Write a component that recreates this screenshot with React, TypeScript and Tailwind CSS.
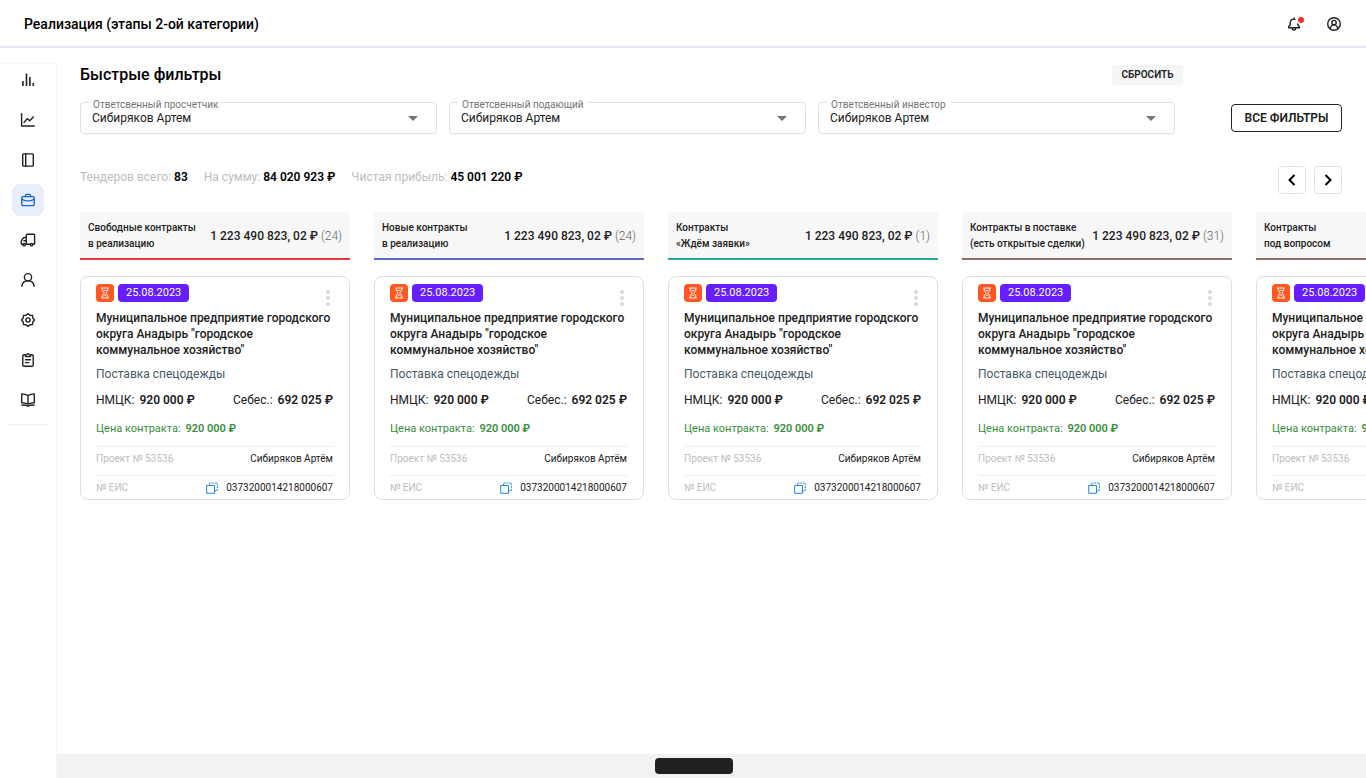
import React, { useRef, useState } from "react";
import clsx from "clsx";

type Column = {
  title: [string, string];
  sum: string;
  count: number;
  border: string;
};

const columns: Column[] = [
  { title: ["Свободные контракты", "в реализацию"], sum: "1 223 490 823, 02 ₽", count: 24, border: "border-[#e53935]" },
  { title: ["Новые контракты", "в реализацию"], sum: "1 223 490 823, 02 ₽", count: 24, border: "border-[#5c6bc0]" },
  { title: ["Контракты", "«Ждём заявки»"], sum: "1 223 490 823, 02 ₽", count: 1, border: "border-[#26a69a]" },
  { title: ["Контракты в поставке", "(есть открытые сделки)"], sum: "1 223 490 823, 02 ₽", count: 31, border: "border-[#8d6e63]" },
  { title: ["Контракты", "под вопросом"], sum: "1 223 490 823, 02 ₽", count: 12, border: "border-[#8d6e63]" },
];

const filters = [
  { id: "calc", label: "Ответсвенный просчетчик" },
  { id: "submit", label: "Ответсвенный подающий" },
  { id: "invest", label: "Ответсвенный инвестор" },
];

const stats = [
  { label: "Тендеров всего:", value: "83" },
  { label: "На сумму:", value: "84 020 923 ₽" },
  { label: "Чистая прибыль:", value: "45 001 220 ₽" },
];

const Icon = ({ children }: { children: React.ReactNode }) => (
  <svg
    viewBox="0 0 16 16"
    className="size-4"
    fill="none"
    stroke="currentColor"
    strokeWidth="1.4"
    strokeLinecap="round"
    strokeLinejoin="round"
    aria-hidden="true"
  >
    {children}
  </svg>
);

const menu = [
  {
    name: "Статистика",
    icon: <path d="M2.9 9V14M6.5 1.5V14M9.900 5V14M13.300 11V14" strokeLinecap="butt" strokeWidth="1.600" />,
  },
  {
    name: "График",
    icon: <path d="M1.600 1.600v12.400H14.300M4 10.400l3.300-3.600 2.400 2 3.600-3.700" />,
  },
  {
    name: "Журнал",
    icon: (
      <>
        <rect x="2.7" y="1.9" width="10.6" height="12.2" rx="0.8" />
        <path d="M5.700 2v12" />
      </>
    ),
  },
  {
    name: "Реализация",
    icon: (
      <>
        <rect x="1.8" y="4.600" width="12.4" height="9" rx="1" />
        <path d="M5.500 4.400V3.400c0-.6.4-1 1-1h3c.6 0 1 .4 1 1v1M2 7.400c1.600.9 3 1.400 4.500 1.500h3c1.500-.1 2.900-.6 4.500-1.500M6.800 8.900h2.400" />
      </>
    ),
  },
  {
    name: "Доставка",
    icon: (
      <>
        <path d="M6.300 12.300V3c0-.5.3-.8.800-.8h6.700c.5 0 .8.3.8.800v8.500c0 .5-.3.800-.8.800h-1M10.300 12.300H5.700M6.300 5.500H4.200c-.5 0-.8.2-1 .6L1.500 8.700c-.1.200-.2.500-.2.700v2.100c0 .5.3.8.800.800h.4M6.300 8.700H3.900" />
        <circle cx="4.100" cy="12.700" r="1.200" />
        <circle cx="11.600" cy="12.700" r="1.200" />
      </>
    ),
  },
  {
    name: "Клиенты",
    icon: (
      <>
        <circle cx="8" cy="5.200" r="3.600" />
        <path d="M1.800 14.300c.4-3.400 2.900-5.500 6.200-5.500s5.800 2.100 6.200 5.500" />
      </>
    ),
  },
  {
    name: "Настройки",
    icon: (
      <>
        <path d="M8 1.600 10 3.200 12.500 3.500 12.800 6 14.400 8 12.800 10 12.500 12.500 10 12.800 8 14.400 6 12.800 3.500 12.500 3.200 10 1.600 8 3.200 6 3.500 3.500 6 3.200z" />
        <circle cx="8" cy="8" r="2.100" />
      </>
    ),
  },
  {
    name: "Задачи",
    icon: (
      <>
        <path d="M5.300 2.800H4c-.7 0-1.200.5-1.200 1.200v9c0 .7.500 1.200 1.200 1.200h8c.7 0 1.200-.5 1.200-1.200V4c0-.7-.5-1.200-1.200-1.200h-1.300" />
        <path d="M5.500 4.600V3.200l1.300-.4c.2-.7.600-1.100 1.200-1.100s1 .4 1.200 1.100l1.300.4v1.400zM5.500 7.700h5M5.500 10.600h3.400" />
      </>
    ),
  },
  {
    name: "Справочник",
    icon: (
      <>
        <path d="M8 3.600C6.200 2.300 4.200 1.900 1.700 1.900v8.800c2.500 0 4.500.3 6.300 1.400 1.800-1.100 3.800-1.400 6.300-1.400V1.900C11.800 1.900 9.800 2.300 8 3.600zM8 3.600v8.500" />
        <path d="M1.700 13.100c2.200-.3 4.300 0 6.300 1.100 2-1.100 4.100-1.400 6.300-1.100" />
      </>
    ),
  },
];

const Header = () => (
  <header className="flex h-12 items-center justify-between border-b-2 border-[#e7e5f2] px-6 pt-0.5">
    <h1 className="text-[14px] font-medium leading-5 text-black">
      Реализация (этапы 2-ой категории)
    </h1>
    <div className="flex gap-6">
      <button type="button" aria-label="Уведомления" className="relative size-4">
        <Icon>
          <path d="M8 2v1M9 3.300C6.500 2.600 4.300 4 4.300 6.500v2.300L2.600 10.700v1h10.800v-1L11.700 8.800V8M6.300 12c0 1.300.7 2.100 1.700 2.100s1.700-.8 1.700-2.100" />
        </Icon>
        <span className="absolute -right-0.5 top-px size-1.5 rounded-full bg-[#ff2d2d]" />
      </button>
      <button type="button" aria-label="Профиль" className="size-4">
        <Icon>
          <circle cx="8" cy="8" r="6.300" />
          <circle cx="8" cy="6.600" r="2.200" />
          <path d="M4.300 12.800c.3-2.400 1.700-3.900 3.700-3.900s3.400 1.500 3.700 3.900" />
        </Icon>
      </button>
    </div>
  </header>
);

const Sidebar = () => (
  <aside className="mt-[15px] w-[57px] shrink-0 border-r border-t border-[#f7f7fa]">
    <nav className="mx-2 flex flex-col items-center gap-2 border-b border-[#f0f0fa] pb-2">
      {menu.map((item) => (
        <button
          key={item.name}
          type="button"
          aria-label={item.name}
          className={clsx(
            "flex size-8 items-center justify-center rounded-lg",
            item.name === "Реализация" ? "bg-[#e8eefa] text-[#1f66d6]" : "text-[#212121]"
          )}
        >
          <Icon>{item.icon}</Icon>
        </button>
      ))}
    </nav>
  </aside>
);

const FilterSelect = ({ id, label }: { id: string; label: string }) => (
  <div className="relative">
    <select
      id={id}
      className="h-8 w-full appearance-none rounded border border-[#e0e0e0] bg-white px-[11px] text-[12px] leading-4 text-[#212121]"
    >
      <option>Сибиряков Артем</option>
    </select>
    <label
      htmlFor={id}
      className="absolute -top-[3px] left-[9px] bg-white px-1 text-[10px] leading-3 text-[#757575]"
    >
      {label}
    </label>
    <svg
      viewBox="0 0 10 5"
      className="pointer-events-none absolute right-[19px] top-3.5 h-[5px] w-2.5 fill-[#757575]"
      aria-hidden="true"
    >
      <path d="M0 0h10L5 5z" />
    </svg>
  </div>
);

const Card = () => (
  <article className="rounded-lg border border-[#e0e0e0] bg-white px-[15px] pb-[3px] pt-[7px] text-[12px] leading-4 text-[#212121]">
    <div className="flex items-start justify-between">
      <div className="flex gap-1">
        <span className="flex size-[18px] items-center justify-center rounded bg-[#ff5722] text-white">
          <svg viewBox="0 0 12 12" className="size-3" fill="none" stroke="currentColor" aria-hidden="true">
            <path d="M2 1h8M2 11h8M3.200 1v2.300L5.200 6 3.200 8.700V11M8.800 1v2.300L6.800 6l2 2.700V11M4.500 3.500h3M4.500 9 6 7.800 7.500 9" strokeWidth="0.9" />
          </svg>
        </span>
        <span className="rounded bg-[#651fff] px-2 text-[11px] leading-[18px] text-white">
          25.08.2023
        </span>
      </div>
      <button type="button" aria-label="Меню карточки" className="mt-1 flex h-5 w-3 items-center justify-center">
        <svg viewBox="0 0 4 16" className="h-4 w-1 fill-[#d9d9d9]" aria-hidden="true">
          <circle cx="2" cy="2" r="2" />
          <circle cx="2" cy="8" r="2" />
          <circle cx="2" cy="14" r="2" />
        </svg>
      </button>
    </div>
    <h3 className="mt-0.5 font-medium">
      Муниципальное предприятие городского округа Анадырь "городское коммунальное хозяйство"
    </h3>
    <p className="mt-2 text-[#455a64]">Поставка спецодежды</p>
    <div className="mt-2.5 flex justify-between pr-px">
      <p>
        НМЦК: <b className="ml-0.5 font-semibold">920 000 ₽</b>
      </p>
      <p>
        Себес.: <b className="ml-0.5 font-semibold">692 025 ₽</b>
      </p>
    </div>
    <p className="mt-[13px] text-[11px] text-[#388e3c]">
      Цена контракта: <b className="ml-0.5 font-semibold">920 000 ₽</b>
    </p>
    <div className="mt-[9px] flex justify-between border-t border-[#eeeeee] pb-2 pr-px pt-1 text-[10px]">
      <span className="text-[#bdbdbd]">Проект № 53536</span>
      <span>Сибиряков Артём</span>
    </div>
    <div className="flex justify-between border-t border-[#eeeeee] pr-px pt-1 text-[10px]">
      <span className="text-[#bdbdbd]">№ ЕИС</span>
      <span className="flex items-center gap-2">
        <button type="button" aria-label="Скопировать номер" className="text-[#1e88e5]">
          <svg viewBox="0 0 12 12" className="size-3" fill="none" stroke="currentColor" aria-hidden="true">
            <path d="M.7 3.500h7.800v7.800H.7z" />
            <path d="M3.500 3.500V1h7.800v7.800H8.500" strokeDasharray="1.800 0.900" />
          </svg>
        </button>
        0373200014218000607
      </span>
    </div>
  </article>
);

const arrowClass =
  "flex size-7 items-center justify-center rounded border border-[#e0e0e0] bg-white text-black";

export default function App() {
  const boardRef = useRef<HTMLDivElement>(null);
  const [formKey, setFormKey] = useState(0);

  const scroll = (dir: number) => {
    boardRef.current?.scrollBy({ left: dir * 294, behavior: "smooth" });
  };

  return (
    <div className="flex min-h-screen flex-col bg-white font-[Roboto,sans-serif] text-[#212121]">
      <Header />
      <div className="flex flex-1">
        <Sidebar />
        <div className="flex min-w-0 flex-1 flex-col">
          <main className="flex-1 pl-[23px] pt-4">
            <section className="flex items-end gap-12 pr-6">
              <div className="flex-1">
                <div className="flex items-center justify-between">
                  <h2 className="text-[16px] font-medium leading-[22px] text-black">Быстрые фильтры</h2>
                  {/* remounts the selects with their defaults */}
                  <button
                    type="button"
                    onClick={() => setFormKey(formKey + 1)}
                    className="h-5 w-[71px] rounded bg-[#f5f5f5] text-[10px] font-semibold uppercase leading-4"
                  >
                    Сбросить
                  </button>
                </div>
                <div key={formKey} className="mt-4 grid grid-cols-3 gap-3 pr-2">
                  {filters.map((f) => (
                    <FilterSelect key={f.id} {...f} />
                  ))}
                </div>
              </div>
              <button
                type="button"
                className="mb-0.5 h-7 w-[111px] rounded border border-[#212121] text-[12px] font-semibold uppercase leading-4"
              >
                Все фильтры
              </button>
            </section>

            <section className="mt-8 flex items-start justify-between pr-6">
              <div className="flex gap-4 pt-[3px] text-[12px] leading-4">
                {stats.map((s) => (
                  <p key={s.label} className="text-[#bdbdbd]">
                    {s.label} <b className="font-semibold text-black">{s.value}</b>
                  </p>
                ))}
              </div>
              <div className="flex gap-2">
                <button type="button" aria-label="Назад" className={arrowClass} onClick={() => scroll(-1)}>
                  <svg viewBox="0 0 12 12" className="size-3" fill="none" stroke="currentColor" strokeWidth="2">
                    <path d="M8.500 1 3.500 6l5 5" />
                  </svg>
                </button>
                <button type="button" aria-label="Вперёд" className={arrowClass} onClick={() => scroll(1)}>
                  <svg viewBox="0 0 12 12" className="size-3" fill="none" stroke="currentColor" strokeWidth="2">
                    <path d="m3.500 1 5 5-5 5" />
                  </svg>
                </button>
              </div>
            </section>

            <div ref={boardRef} className="mt-[18px] flex gap-6 overflow-x-auto [scrollbar-width:none]">
              {columns.map((col, i) => (
                <section key={i} className="w-[270px] shrink-0">
                  <div
                    className={clsx(
                      "flex h-12 items-center justify-between rounded-t border-b-2 bg-[#f7f7f7] px-2 pt-0.5",
                      col.border
                    )}
                  >
                    <h2 className="whitespace-nowrap text-[10px] font-medium leading-4">
                      {col.title[0]}
                      <br />
                      {col.title[1]}
                    </h2>
                    <p className="whitespace-nowrap text-[12px] font-medium leading-4">
                      {col.sum} <span className="font-light text-[#616161]">({col.count})</span>
                    </p>
                  </div>
                  <div className="mt-4">
                    <Card />
                  </div>
                </section>
              ))}
            </div>
          </main>
          <footer className="flex h-6 items-center justify-center bg-[#f2f2f2] pr-9">
            <div className="h-4 w-[78px] rounded bg-[#212121]" />
          </footer>
        </div>
      </div>
    </div>
  );
}
